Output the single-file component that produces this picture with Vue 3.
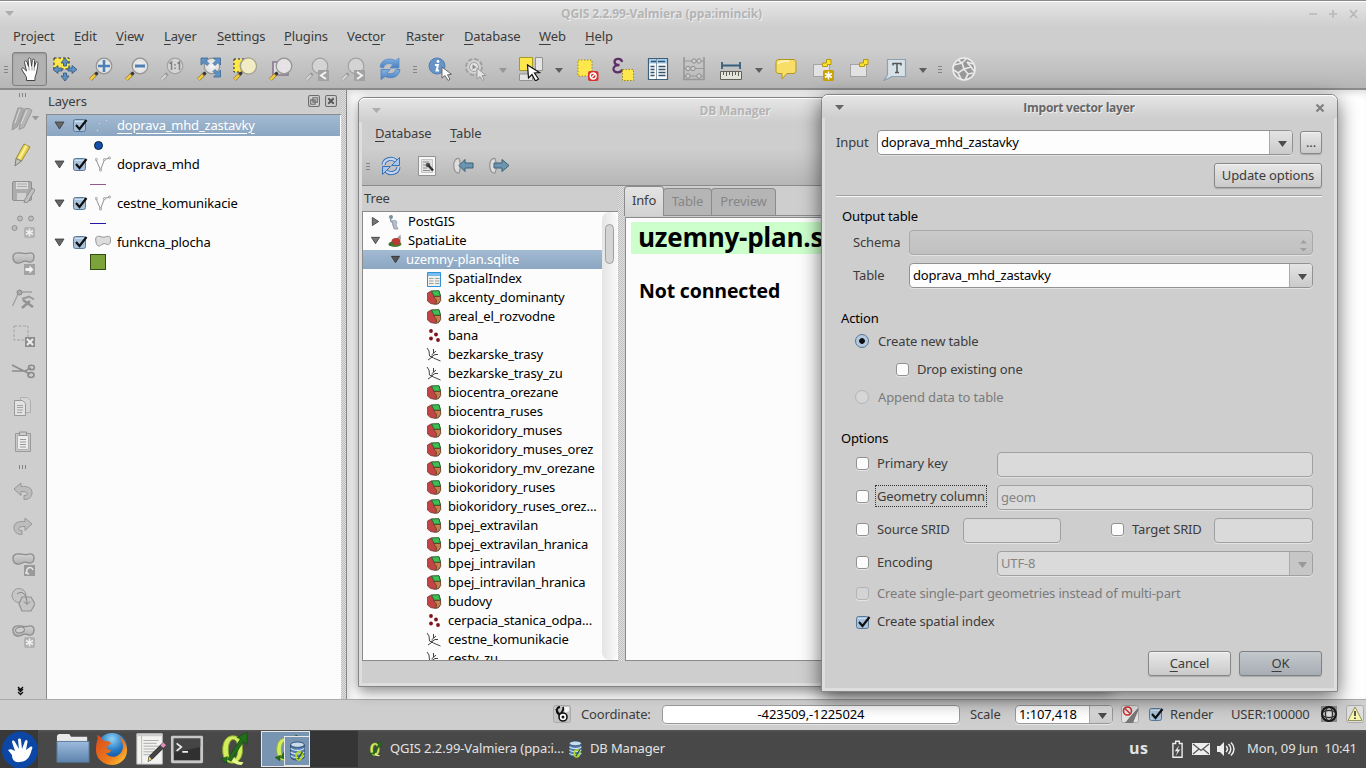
<script setup>
const menus = [
  { a: 'P', b: 'r', c: 'oject', w: 61 }, { a: '', b: 'E', c: 'dit', w: 42 }, { a: '', b: 'V', c: 'iew', w: 48 },
  { a: '', b: 'L', c: 'ayer', w: 53 }, { a: '', b: 'S', c: 'ettings', w: 67 }, { a: '', b: 'P', c: 'lugins', w: 63 },
  { a: 'Vect', b: 'o', c: 'r', w: 59 }, { a: '', b: 'R', c: 'aster', w: 58 }, { a: '', b: 'D', c: 'atabase', w: 75 },
  { a: '', b: 'W', c: 'eb', w: 46 }, { a: '', b: 'H', c: 'elp', w: 40 },
]
const tools = [
  { i: 'grip', w: 12 }, { i: 'hand', w: 35, on: true }, { i: 'pansel', w: 35 }, { i: 'zoomin', w: 37 }, { i: 'zoomout', w: 35 },
  { i: 'zoomone', w: 36 }, { i: 'zoomfull', w: 37 }, { i: 'zoomsel', w: 36 }, { i: 'zoomlayer', w: 36 },
  { i: 'zoomlast', w: 36 }, { i: 'zoomnext', w: 36 }, { i: 'refresh', w: 37 }, { i: 'grip', w: 14 },
  { i: 'info', w: 36 }, { i: 'gear', w: 36 }, { i: 'dropoff', w: 18 }, { i: 'select', w: 38 }, { i: 'drop', w: 18 },
  { i: 'deselect', w: 38 }, { i: 'epsilon', w: 34 }, { i: 'table', w: 36 }, { i: 'abacus', w: 36 }, { i: 'ruler', w: 37 },
  { i: 'drop', w: 19 }, { i: 'bubble', w: 36 }, { i: 'bmnew', w: 38 }, { i: 'bookmark', w: 34 }, { i: 'textnote', w: 38 },
  { i: 'drop', w: 17 }, { i: 'grip', w: 18 }, { i: 'globe', w: 30 },
]
const sideTools = [
  { i: 'vgrip', h: 10 }, { i: 'pencils', h: 37 }, { i: 'pencil', h: 36 }, { i: 'save', h: 35 }, { i: 'points', h: 37 },
  { i: 'movefeat', h: 36 }, { i: 'nodetool', h: 37 }, { i: 'delsel', h: 35 }, { i: 'scissors', h: 35 }, { i: 'copy', h: 36 },
  { i: 'paste', h: 36 }, { i: 'vgrip', h: 14 }, { i: 'undo', h: 35 }, { i: 'redo', h: 36 }, { i: 'rotate', h: 37 },
  { i: 'simplify', h: 36 }, { i: 'ring', h: 36 },
]
const layers = [
  { n: 'doprava_mhd_zastavky', i: 'lpoint', s: 'sdot', sel: true }, { n: 'doprava_mhd', i: 'lline', s: 'spurple' },
  { n: 'cestne_komunikacie', i: 'lline', s: 'sblue' }, { n: 'funkcna_plocha', i: 'lpoly', s: 'sgreen' },
]
const tree = [
  ['SpatialIndex', 'tbl'], ['akcenty_dominanty', 'poly'], ['areal_el_rozvodne', 'poly'], ['bana', 'pts'],
  ['bezkarske_trasy', 'lin'], ['bezkarske_trasy_zu', 'lin'], ['biocentra_orezane', 'poly'], ['biocentra_ruses', 'poly'],
  ['biokoridory_muses', 'poly'], ['biokoridory_muses_orez', 'poly'], ['biokoridory_mv_orezane', 'poly'],
  ['biokoridory_ruses', 'poly'], ['biokoridory_ruses_orez...', 'poly'], ['bpej_extravilan', 'poly'],
  ['bpej_extravilan_hranica', 'poly'], ['bpej_intravilan', 'poly'], ['bpej_intravilan_hranica', 'poly'],
  ['budovy', 'poly'], ['cerpacia_stanica_odpa...', 'pts'], ['cestne_komunikacie', 'lin'], ['cesty_zu', 'lin'],
]
</script>

<template>
  <svg class="defs" aria-hidden="true">
    <defs>
      <linearGradient id="gBlue" x1="0" y1="0" x2="0" y2="1"><stop offset="0" stop-color="#86b2e2" /><stop offset="1" stop-color="#477fc0" /></linearGradient>
      <linearGradient id="gGrey" x1="0" y1="0" x2="0" y2="1"><stop offset="0" stop-color="#d2d2d2" /><stop offset="1" stop-color="#b0b0b0" /></linearGradient>
      <radialGradient id="gLens"><stop offset="0" stop-color="#f6f6f6" /><stop offset="1" stop-color="#dcdcdc" /></radialGradient>
      <linearGradient id="gFolder" x1="0" y1="0" x2="0" y2="1"><stop offset="0" stop-color="#9dbbdc" /><stop offset="1" stop-color="#5d83ad" /></linearGradient>
      <radialGradient id="gFox" cx=".5" cy=".2" r=".8"><stop offset="0" stop-color="#8fd3f5" /><stop offset=".5" stop-color="#2478c4" /><stop offset="1" stop-color="#123a80" /></radialGradient>
      <linearGradient id="gFlame" x1="0" y1="0" x2="1" y2="1"><stop offset="0" stop-color="#d9481a" /><stop offset=".6" stop-color="#ee7a1c" /><stop offset="1" stop-color="#ffd23c" /></linearGradient>
    </defs>
    <symbol id="grip" viewBox="0 0 24 24"><path d="M10 9.500h4M10 12.500h4M10 15.500h4" stroke="#858585" /></symbol>
    <symbol id="vgrip" viewBox="0 0 24 24"><path d="M8.500 10v4M11.500 10v4M14.500 10v4" stroke="#858585" /></symbol>
    <symbol id="drop" viewBox="0 0 24 24"><path d="M8 11h8l-4 5z" fill="#5e5e5e" /></symbol>
    <symbol id="dropoff" viewBox="0 0 24 24"><path d="M8 11h8l-4 5z" fill="#969696" /></symbol>
    <symbol id="hand" viewBox="0 0 24 24"><path d="M7.500 18.500 4 13c-1-1.800 1-2.700 2.200-1.200L8.500 14 6.500 5.500c-.4-2 2-2.300 2.500-.5l1.500 4.500-.3-7c0-2 2.400-2 2.600 0l.8 6.800.8-6c.3-1.700 2.300-1.500 2.200.3l-.3 6.600 1.500-4.500c.6-1.500 2.400-1 2.200.6-.5 4-1 8-2 11l-1 3.200v3H8.500v-3z" fill="#fff" stroke="#444" /><path d="M11 9.500v4M14 9.500v4M16.500 10l-.5 3.500" stroke="#999" /></symbol>
    <symbol id="pansel" viewBox="0 0 24 24"><path d="M1 1h15v11H1z" fill="#fde74c" stroke="#222" stroke-dasharray="2.500 2" /><path d="m12 1 4 5h-2.500v3h-3V6H8zM12 24l4-5h-2.500v-3h-3v3H8zM0 12.500l5-4V11h4v3H5v2.500zM24 12.500l-5-4V11h-4v3h4v2.500z" fill="#6090c0" stroke="#2b5580" stroke-width=".8" /></symbol>
    <symbol id="lens" viewBox="0 0 24 24"><path d="m1.500 22.500 6.500-6.500" stroke="#6d643c" stroke-width="3.600" /><path d="m1.500 22.500 4.500-4.500" stroke="#f4c938" stroke-width="2.600" /><path d="m6.800 17.200 1.800-1.800" stroke="#333" stroke-width="2.800" /><circle cx="15" cy="9" r="7.800" fill="url(#gLens)" stroke="#949494" stroke-width="1.200" /></symbol>
    <symbol id="glens" viewBox="0 0 24 24"><path d="m1.500 22.500 6-6" stroke="#9a9a9a" stroke-width="3.600" /><path d="m1.500 22.500 4.500-4.500" stroke="#d4d4d4" stroke-width="2.300" /><circle cx="15" cy="9" r="7.800" fill="#d4d4d4" stroke="#a2a2a2" stroke-width="1.200" /></symbol>
    <symbol id="zoomin" viewBox="0 0 24 24"><use href="#lens" /><path d="M9 9h12M15 3v12" stroke="#4d80b4" stroke-width="2.600" /></symbol>
    <symbol id="zoomout" viewBox="0 0 24 24"><use href="#lens" /><path d="M10 9h10" stroke="#4d80b4" stroke-width="3" /></symbol>
    <symbol id="zoomone" viewBox="0 0 24 24"><use href="#glens" /><path d="m9.500 6.500 2-1.500v8M17.500 6.500l2-1.500v8M15 7v1.500M15 10.500V12" fill="none" stroke="#808080" stroke-width="1.500" /></symbol>
    <symbol id="zoomfull" viewBox="0 0 24 24"><use href="#lens" /><path d="M4 1h7L9 3.500l3 3-2 2-3-3L4 8zM23.500 1v7L21 5.500l-3 3-2-2 3-3L16.500 1zM23.500 20h-7l2.500-2.500-3-3 2-2 3 3 2.500-2.500z" fill="#5f93c8" stroke="#3b6a98" stroke-width=".8" /></symbol>
    <symbol id="zoomsel" viewBox="0 0 24 24"><path d="M1 2h14v13H1z" fill="#fde74c" stroke="#222" stroke-dasharray="2 2" /><use href="#lens" /><circle cx="15.500" cy="9" r="8" fill="#f2ecc5" stroke="#a4a08a" stroke-width="1.200" /></symbol>
    <symbol id="zoomlayer" viewBox="0 0 24 24"><path d="M4 5h15v13H4z" fill="#ddd" stroke="#8b7690" stroke-width="1.600" /><use href="#lens" /><path d="M10 5h9v8h-9z" fill="#e6dee6" opacity=".8" /></symbol>
    <symbol id="zoomlast" viewBox="0 0 24 24"><use href="#glens" /><path d="M13 13h11v11H13z" fill="#a2a2a2" /><path d="m21 15-5 3.500 5 3.500" fill="none" stroke="#f4f4f4" stroke-width="2" /></symbol>
    <symbol id="zoomnext" viewBox="0 0 24 24"><use href="#glens" /><path d="M13 13h11v11H13z" fill="#a2a2a2" /><path d="m16 15 5 3.500-5 3.500" fill="none" stroke="#f4f4f4" stroke-width="2" /></symbol>
    <symbol id="refresh" viewBox="0 0 24 24"><path d="M2 10C3 3 10 0 17.500 3.500L21 1v10h-9l3-3.500C10 5.500 6.500 7 5.500 11z" fill="url(#gBlue)" stroke="#5a8cc8" stroke-width=".8" /><path d="M22 12.500c-1 7.500-8 10-15 7L3 22.500v-10h9L9 16c4 2 8 0 9-3.500z" fill="url(#gBlue)" stroke="#4a80c0" stroke-width=".8" /></symbol>
    <symbol id="arrowcur" viewBox="0 0 24 24"><path d="M12 10v11l3-2.500 3 5 2-1.200-2.500-4.500 4-.5z" fill="#fff" stroke="#666" /></symbol>
    <symbol id="info" viewBox="0 0 24 24"><circle cx="9" cy="9" r="8" fill="#6793c6" stroke="#4f7fb5" /><circle cx="10" cy="4.500" r="1.400" fill="#fff" /><path d="M7 8h3L8.500 13.500H11" fill="none" stroke="#fff" stroke-width="1.900" /><use href="#arrowcur" x="2" /></symbol>
    <symbol id="gear" viewBox="0 0 24 24"><circle cx="10" cy="10" r="7.500" fill="#c4c4c4" stroke="#a0a0a0" stroke-width="3" stroke-dasharray="4 1.900" /><circle cx="10" cy="10" r="7" fill="#d2d2d2" /><circle cx="10" cy="10" r="4.500" fill="#e2e2e2" stroke="#a0a0a0" /><path d="m8.500 7.500 4 2.500-4 2.500z" fill="#8c8c8c" /><path d="M13 11v11l3-2.500 2.500 4 1.500-1-2-4h4z" fill="#e4e4e4" stroke="#9a9a9a" /></symbol>
    <symbol id="select" viewBox="0 0 24 24"><path d="M.5.500h13v13H.500z" fill="#fde74c" stroke="#a89a1c" /><path d="M16.500.500h7v13h-7zM.500 17h13v6.500H.500z" fill="#e4e4e4" stroke="#929292" /><path d="m8.500 8 1 13 3.500-3.500 3.500 6.500 3-2-4-6 5-.5z" fill="#fff" stroke="#111" stroke-width="1.200" /></symbol>
    <symbol id="deselect" viewBox="0 0 24 24"><path d="M3 3h14v16H3z" fill="#fde74c" stroke="#a08a10" stroke-dasharray="1.500 1.500" /><rect x="13" y="14" width="10.500" height="10" rx="2" fill="#dc3030" /><circle cx="18.200" cy="19" r="3" fill="none" stroke="#fff" stroke-width="1.300" /><path d="m16 21 4-4" stroke="#fff" stroke-width="1.300" /></symbol>
    <symbol id="epsilon" viewBox="0 0 24 24"><path d="M11 5C10.500 1 4 1 3.500 4.500 3.500 7 6 8 8.500 8 5 8 2 9.500 2.500 12.500 3.500 16.500 10 16 11.500 12.500" fill="none" stroke="#5d2e68" stroke-width="2.300" /><path d="M11.500 12.500h11v11h-11z" fill="#fde74c" stroke="#a08a10" stroke-dasharray="1.500 1.500" /></symbol>
    <symbol id="table" viewBox="0 0 24 24"><path d="M2.500 1.500h19v21h-19z" fill="#fafafa" stroke="#3c5f7a" stroke-width="1.200" /><path d="M3 2h18v4.500H3z" fill="#a8cce8" /><path d="M5 4.500h5M12 4.500h7" stroke="#2f536e" stroke-width="1.400" /><path d="M10.500 2v20" stroke="#6a8498" stroke-width=".8" /><path d="M4.500 9.500h4M12.500 9.500h7M4.500 12.500h4M12.500 12.500h7M4.500 15.500h4M12.500 15.500h7M4.500 18.500h4M12.500 18.500h7" stroke="#34526a" stroke-width="1.300" /></symbol>
    <symbol id="abacus" viewBox="0 0 24 24"><path d="M2 0v23M22 0v23M1 22.500h22" stroke="#989898" stroke-width="1.600" /><path d="M2 4h20M2 11.500h20M2 19h20" stroke="#989898" /><g fill="#cfcfcf" stroke="#8c8c8c"><circle cx="12" cy="4" r="2.200" /><circle cx="17" cy="4" r="2.200" /><circle cx="6" cy="11.500" r="2.200" /><circle cx="11" cy="11.500" r="2.200" /><circle cx="6" cy="19" r="2.200" /><circle cx="17" cy="19" r="2.200" /></g></symbol>
    <symbol id="ruler" viewBox="0 0 24 24"><path d="M3 8.500h18M3 5v7M21 5v7" stroke="#365f7c" stroke-width="1.800" /><path d="M1.500 14.500h21v8h-21z" fill="#e4e4da" stroke="#606058" /><path d="M4.500 15v3M7.500 15v4M10.500 15v3M13.500 15v4M16.500 15v3M19.500 15v4" stroke="#606058" /></symbol>
    <symbol id="bubble" viewBox="0 0 24 24"><path d="M5 2.500h14c2 0 3 1 3 3v8c0 2-1 3-3 3h-6L8 22v-5.500H5c-2 0-3-1-3-3v-8c0-2 1-3 3-3z" fill="#f8dd66" stroke="#b3951c" /><path d="M4 7c1-3 5-3 11-3" stroke="#fdf3b4" stroke-width="2" fill="none" /></symbol>
    <symbol id="bookmark" viewBox="0 0 24 24"><path d="M3.500 7.500h16v12h-16z" fill="#e2e2e2" stroke="#777" stroke-dasharray="1 1" /><path d="M16.500 2.500h4.500v5h-3.500v2h-5V6h4z" fill="#fde32c" stroke="#b59710" /></symbol>
    <symbol id="bmnew" viewBox="0 0 24 24"><use href="#bookmark" x="-1" /><rect x="12" y="13" width="11" height="11" rx="1.500" fill="#c9a200" /><path d="M17.500 14.500v8M14 16.500l7 4M21 16.500l-7 4" stroke="#fff" stroke-width="1.600" /></symbol>
    <symbol id="textnote" viewBox="0 0 24 24"><path d="M4.500 2.500h18v17H9L1 23.500l3.500-6z" fill="#d7e1e8" stroke="#8ca0ae" stroke-width="1.200" /><path d="M10 8.500v-2h8v2M14 6.500v9M12 15.500h4" fill="none" stroke="#555" stroke-width="1.500" /></symbol>
    <symbol id="globe" viewBox="0 0 24 24"><circle cx="12" cy="12" r="11" fill="#989898" stroke="#eee" stroke-width="1.600" /><path d="M2 8l8-2 5-5M10 6l2 6-6 4-4-3M12 12l7-2 3 4M19 10l-4-5M6 16l3 6M12 12l4 5-3 6M16 17l5-1M6 3l4 3M15 5l6 2" fill="none" stroke="#e8e8e8" stroke-width="1.700" /></symbol>
    <symbol id="pencils" viewBox="0 0 24 24"><path d="M7 1h4l3 2L6 20l-5 3 1-7z" fill="#aaa" stroke="#999" /><path d="M14 1.500h4l3 2-8 17-5 2 1-6z" fill="#b5b5b5" stroke="#999" /><path d="M16 3 10 17M9 2 4 16" stroke="#ddd" /></symbol>
    <symbol id="pencil" viewBox="0 0 24 24"><path d="m13 1 6 3-8.500 14L5 15.500z" fill="#e8d04a" stroke="#9a8f40" /><path d="M15.500 2.500 8 16" stroke="#fbf2a0" stroke-width="2" /><path d="m5 15.500-1 7.500 6.500-5z" fill="#c4c4b8" stroke="#808078" /></symbol>
    <symbol id="save" viewBox="0 0 24 24"><rect x="1.500" y="2.500" width="19" height="19" rx="1.500" fill="#acacac" stroke="#909090" /><path d="M5 3h12v7H5z" fill="#dadada" /><path d="M6 5h10M6 7.500h10" stroke="#a8a8a8" /><path d="M6 14h9v7H6z" fill="#d0d0d0" /><path d="m21 9 3 2-7 12-4 1 1-4z" fill="#c0c0c0" stroke="#909090" /></symbol>
    <symbol id="points" viewBox="0 0 24 24"><g fill="#bcbcbc" stroke="#929292"><circle cx="9" cy="3.500" r="2.500" /><circle cx="20" cy="3.500" r="2.500" /><circle cx="3.500" cy="13" r="2.500" /></g><rect x="13" y="12" width="11" height="11" rx="2" fill="#b2b2b2" /><path d="M18.500 13.500v8M15 15.500l7 4M22 15.500l-7 4" stroke="#eee" stroke-width="1.500" /></symbol>
    <symbol id="blob" viewBox="0 0 24 24"><path d="M2 8c0-4 4-4.500 7-4s5 1 7 .5c5-1.500 7 0 7 3s-1 6-5 5.500c-3-.5-4-1.500-6-.5-2 1.500-4 2-6 1.500C3 13.500 2 11 2 8z" fill="url(#gGrey)" stroke="#8d8d8d" stroke-width="1.300" /></symbol>
    <symbol id="movefeat" viewBox="0 0 24 24"><use href="#blob" y="-2" /><path d="M13 13h11v11H13z" fill="#a2a2a2" /><path d="M14.500 17h4v-2.500l4 4-4 4V20h-4z" fill="#f2f2f2" /></symbol>
    <symbol id="nodetool" viewBox="0 0 24 24"><path d="M1.500 18 8 4h13" fill="none" stroke="#a0a0a0" stroke-width="1.300" /><circle cx="8.500" cy="4.500" r="2.500" fill="#a8a8a8" stroke="#888" /><path d="m11 20 8-7M12 12l10 7" stroke="#929292" stroke-width="2.600" /><path d="m11 11 7-2.500 5 3" fill="none" stroke="#999" stroke-width="2" /></symbol>
    <symbol id="delsel" viewBox="0 0 24 24"><path d="M3 2h14v14H3z" fill="none" stroke="#a2a2a2" stroke-dasharray="3 1.500" /><path d="M14 13h10v10H14z" fill="#8c8c8c" /><path d="m16 15 6 6M22 15l-6 6" stroke="#eee" stroke-width="2" /></symbol>
    <symbol id="scissors" viewBox="0 0 24 24"><path d="m1 6 18 9M1 12h13l6-3" fill="none" stroke="#8c8c8c" stroke-width="1.600" /><ellipse cx="20.500" cy="8.500" rx="3" ry="2.200" fill="none" stroke="#8a8a8a" stroke-width="1.600" /><ellipse cx="20" cy="16" rx="3" ry="2.500" fill="none" stroke="#8a8a8a" stroke-width="1.600" /></symbol>
    <symbol id="copy" viewBox="0 0 24 24"><path d="M9.500 3.500h7l3 3v12h-10z" fill="#d4d4d4" stroke="#b0b0b0" /><path d="M3.500 6.500h8l3 3v12h-11z" fill="#e2e2e2" stroke="#999" /><path d="M6 11.500h6M6 13.500h6M6 16h6M6 18.500h5" stroke="#a2a2a2" /></symbol>
    <symbol id="paste" viewBox="0 0 24 24"><path d="M4.500 3.500h15v18h-15z" fill="#c8c8c8" stroke="#999" /><path d="M6.500 5.500h11v14h-11z" fill="#ececec" stroke="#b0b0b0" /><path d="M8.500 2h7v3.500h-7z" fill="#ccc" stroke="#929292" /><path d="M9 9.500h6M9 12h6M9 14.500h6M9 17h6" stroke="#999" /></symbol>
    <symbol id="undo" viewBox="0 0 24 24"><path d="m3 9 7-6v3.500c7-.5 11 1.500 11 6s-3 7-8 7v-4c3 0 4-1 3-2.500s-3-1.500-6-1.500v4z" fill="#bdbdbd" stroke="#979797" /></symbol>
    <symbol id="redo" viewBox="0 0 24 24"><path d="m21 9-7-6v3.500C7 6 3 8 3 12.500s3 7 8 7v-4c-3 0-4-1-3-2.500s3-1.500 6-1.500v4z" fill="#bdbdbd" stroke="#979797" /></symbol>
    <symbol id="rotate" viewBox="0 0 24 24"><use href="#blob" y="-2" /><path d="M13 13h11v11H13z" fill="#999" /><path d="M16 21c-2-6 5-7 6-3M18 22l-3-1 1-3" fill="none" stroke="#e5e5e5" stroke-width="1.500" /></symbol>
    <symbol id="simplify" viewBox="0 0 24 24"><circle cx="8" cy="7.500" r="7" fill="#c6c6c6" stroke="#999" /><path d="m11 9 9 0 4 7-4 7h-9l-3-7z" fill="#c4c4c4" stroke="#929292" stroke-width="1.200" /><path d="M6 6c5-4 10 0 10 10M13 13.500l3 3 3-3" fill="none" stroke="#858585" /></symbol>
    <symbol id="ring" viewBox="0 0 24 24"><use href="#blob" y="-2" /><ellipse cx="9" cy="6" rx="4.500" ry="2.800" fill="#cecece" stroke="#8d8d8d" transform="rotate(-10 9 6)" /><rect x="13" y="13" width="11" height="11" rx="2" fill="#b2b2b2" /><path d="M18.500 14.500v8M15 16.500l7 4M22 16.500l-7 4" stroke="#eee" stroke-width="1.500" /></symbol>
    <symbol id="check" viewBox="0 0 16 16"><rect x="1.500" y="2.500" width="12" height="12" rx="2" fill="#a9c2dc" stroke="#587998" /><path d="M3 4.500h9" stroke="#d0deec" /><path d="m4 8 3.500 4L14.500 3" fill="none" stroke="#111" stroke-width="2.200" /></symbol>
    <symbol id="lpoint" viewBox="0 0 16 16"><g fill="#d7dde3" stroke="#8fa3b4" stroke-width=".7"><circle cx="4.500" cy="6.500" r="1.100" /><circle cx="2.500" cy="13.500" r="1.100" /><circle cx="11.500" cy="3.500" r="1.100" /></g></symbol>
    <symbol id="lline" viewBox="0 0 16 16"><path d="M1 3.500 5.500 14l4-10.500L14.500 2" fill="none" stroke="#929292" /><g fill="#e2e2e2" stroke="#929292" stroke-width=".7"><circle cx="1.300" cy="3.500" r="1.100" /><circle cx="5.500" cy="14" r="1.200" /><circle cx="9.500" cy="3.500" r="1.100" /><circle cx="14.500" cy="2" r="1.100" /></g></symbol>
    <symbol id="lpoly" viewBox="0 0 16 16"><path d="M.7 5c0-3 3-3.300 5.300-2.300s4 .3 5.500-.2c3.500-1 4.300 1 4 4.500-.3 4-2.800 4-4.500 3-2-1-4 0-5.500 1.500C2 13.500.7 9 .7 5z" fill="#ddd" stroke="#929292" /></symbol>
    <symbol id="poly" viewBox="0 0 16 16"><path d="M1.500 3 5 1h8l1.500 5-1 6.500-4 2-5-1-3-2.500z" fill="#c34444" stroke="#5a3834" stroke-width=".7" /><path d="m5.500 1 7.500-.3 1.500 5.500H8z" fill="#3cc054" stroke="#1e5a2c" stroke-width=".8" /><path d="M7.500 6.500h7l.2 4-2.500 3.500H10l.5-3.500z" fill="#c67f48" stroke="#5a3c2c" stroke-width=".8" /></symbol>
    <symbol id="pts" viewBox="0 0 16 16"><g fill="#7e1218"><circle cx="5" cy="3" r="1.900" /><circle cx="10" cy="6.500" r="1.900" /><circle cx="5" cy="10.500" r="1.900" /><circle cx="12" cy="12" r="1.900" /></g></symbol>
    <symbol id="lin" viewBox="0 0 16 16"><path d="M1 1 3 4l.5 5 4 2 7 3M2 13l5-3.500M5.500 8 10 4M7.500 2v4M5 10l4-2.500h3" fill="none" stroke="#444" stroke-width="1" /></symbol>
    <symbol id="tbl" viewBox="0 0 16 16"><path d="M1.500 1.500h13v14h-13z" fill="#f0f0ec" stroke="#2f91d8" /><path d="M2 2h12v3H2z" fill="#78bdf0" /><path d="M3 7.500h4.500M9 7.500h4.500M3 10h4.500M9 10h4.500M3 12.500h4.500M9 12.500h4.500" stroke="#a0a09a" /></symbol>
    <symbol id="crs" viewBox="0 0 18 18"><path d="M1 1h16v16H1z" fill="#8a8a8a" /><circle cx="9" cy="9" r="7" fill="#b4b4b4" stroke="#161616" stroke-width="2" /><ellipse cx="9" cy="9" rx="3.500" ry="7" fill="none" stroke="#222" /><ellipse cx="9" cy="9" rx="7" ry="3.500" fill="none" stroke="#222" /><circle cx="9" cy="9" r="2.500" fill="#ddd" /></symbol>
    <symbol id="qlogo" viewBox="0 0 30 36"><path d="M14 4C7 4 3 10 3 19s4 14 10 14 11-5 11-14S21 4 14 4zm0 4c4 0 5 5 5 11s-2 10-5 10-5-4-5-10 2-11 5-11z" fill="#d2ee5c" stroke="#86a52c" fill-rule="evenodd" /><path d="M15 26c2 5 5 6 10 6l-2 3c-6 0-10-3-12-7z" fill="#e7f88b" /><path d="M8 29 22 7l-4-1 11-6v13l-4-3-13 21zM1 29l7-3-1 7z" fill="#236e1b" stroke="#124510" stroke-width=".6" /></symbol>
    <symbol id="dbicon" viewBox="0 0 20 22"><path d="M3 4v14c1 4 14 4 15 0V4z" fill="#537fad" stroke="#2a4972" /><ellipse cx="10.500" cy="4" rx="7.500" ry="3" fill="#cbdbe9" stroke="#2a4972" /><path d="M3 8c2 3 13 3 15 0M3 12c2 3 13 3 15 0M3 16c2 3 13 3 15 0" fill="none" stroke="#d3e1ee" stroke-width="1.300" /><path d="M13 12c-5 0-5 9-1 9s6-9 1-9z" fill="none" stroke="#b9d62b" stroke-width="2" /><path d="m11 20 5-8" stroke="#27611f" stroke-width="1.500" /></symbol>
  </svg>

  <div class="desktop">
    <header class="titlebar main-title">
      <svg class="tri" viewBox="0 0 10 6"><path d="M0 0h9L4.500 5z" fill="#adadad" /></svg>
      <span class="wt wt-main">QGIS 2.2.99-Valmiera (ppa:imincik)</span>
      <svg class="winctl" viewBox="0 0 54 12"><path d="M2 6h8M22 6h8M26 2v8M43 2l7 8M50 2l-7 8" stroke="#b8b8b8" stroke-width="1.600" /></svg>
    </header>
    <nav class="menubar">
      <span v-for="m in menus" :key="m.a + m.b + m.c" :style="{ width: m.w + 'px' }">{{ m.a }}<u>{{ m.b }}</u>{{ m.c }}</span>
    </nav>
    <div class="toolbar">
      <span v-for="(t, k) in tools" :key="k" class="tool" :class="{ on: t.on }" :style="{ width: t.w + 'px' }"><svg class="i24"><use :href="'#' + t.i" /></svg></span>
    </div>

    <div class="body">
      <aside class="side">
        <span v-for="(t, k) in sideTools" :key="k" class="stool" :style="{ height: t.h + 'px' }">
          <svg class="i24"><use :href="'#' + t.i" /></svg>
          <svg v-if="t.i === 'pencils'" class="mini" viewBox="0 0 7 5"><path d="M0 0h7L3.500 4.500z" fill="#999" /></svg>
        </span>
        <svg class="chev" viewBox="0 0 7 9"><path d="m1 0 2.500 2.500L6 0M1 2l2.500 2.500L6 2M1 5l2.500 2.500L6 5" fill="none" stroke="#111" stroke-width="1.300" /></svg>
      </aside>
      <section class="dock">
        <div class="dock-head">
          <span>Layers</span>
          <svg class="dockbtn" viewBox="0 0 11 11"><rect x=".5" y=".5" width="10" height="10" rx="1.500" fill="none" stroke="#6c6c6c" /><path d="M4.500 2.500h4v4h-4zM2.500 4.500h4v4h-4z" fill="#cecece" stroke="#6c6c6c" /></svg>
          <svg class="dockbtn" viewBox="0 0 11 11"><rect x=".5" y=".5" width="10" height="10" rx="1.500" fill="none" stroke="#6c6c6c" /><path d="m3 3 5 5M8 3 3 8" stroke="#555" stroke-width="1.800" /></svg>
        </div>
        <div class="layers">
          <template v-for="l in layers" :key="l.n">
            <div class="lrow" :class="{ sel: l.sel }">
              <svg class="tri dark" viewBox="0 0 10 9"><path d="M.5 1h9L5 8z" fill="#666" stroke="#3a3a3a" stroke-width=".8" /></svg>
              <svg class="chk"><use href="#check" /></svg>
              <svg class="i16"><use :href="'#' + l.i" /></svg>
              <span>{{ l.n }}</span>
            </div>
            <div class="srow"><i :class="l.s"></i></div>
          </template>
        </div>
      </section>
      <div class="split"></div>
      <main class="canvas"></main>
    </div>

    <footer class="status">
      <svg class="stbtn s-ext" viewBox="0 0 18 18"><rect x=".5" y=".5" width="17" height="17" rx="2" fill="#c4c4c4" stroke="#aaa" /><path d="M7 2c-4 0-4 7-1 7s5-5 4-7M3 4l4 7 4-8" fill="none" stroke="#111" stroke-width="1.800" /><path d="M11 2h5v4l-4 2z" fill="#f4f4f4" /><circle cx="10" cy="12" r="4" fill="#fff" stroke="#111" stroke-width="1.600" /><circle cx="10" cy="12" r="1.500" fill="#111" /></svg>
      <span class="lab s-co">Coordinate:</span>
      <span class="field s-cf">-423509,-1225024</span>
      <span class="lab s-sc">Scale</span>
      <span class="field s-sf"><b>1:107,418</b><i class="dd"><svg viewBox="0 0 9 6"><path d="M0 0h9L4.500 6z" fill="#4c4c4c" /></svg></i></span>
      <svg class="stbtn s-stop" viewBox="0 0 18 18"><rect x=".5" y=".5" width="17" height="17" rx="2" fill="#e4e4e4" stroke="#aaa" /><path d="M17 3 8 13l-4 5h8l2-5 3-7z" fill="#777" /><circle cx="6.500" cy="6" r="4" fill="#eee" stroke="#cc3030" stroke-width="1.600" /><path d="m4 3.500 5 5" stroke="#cc3030" stroke-width="1.500" /></svg>
      <svg class="chk s-ck"><use href="#check" /></svg>
      <span class="lab s-re">Render</span>
      <span class="lab s-us">USER:100000</span>
      <svg class="stbtn"><use href="#crs" /></svg>
      <svg class="stbtn s-wn" viewBox="0 0 18 18"><rect x=".5" y=".5" width="17" height="17" rx="2" fill="#dedede" stroke="#aaa" /><path d="m9 2 7 13.500H2z" fill="#faf8b0" stroke="#94945c" /><path d="M9 6v5M9 12.500V14" stroke="#333" stroke-width="1.600" /></svg>
    </footer>

    <div class="taskbar">
      <span class="start"><svg viewBox="0 0 38 38"><ellipse cx="20" cy="20" rx="18" ry="18.500" fill="#0c47a5" /><path d="M8 20c3-2 5 0 7 1l-3-9c0-2 2-2 3 0l4 7-1-9c0-2 3-2 3 0l1 9 3-8c1-2 3-1 2.500 1L26 20l4-3c2-1 3 0 2 2-2 6-3 12-12 13-6 1-8-3-8-7z" fill="#fff" /></svg></span>
      <svg class="tk k-fo" viewBox="0 0 36 36"><path d="M1 9V4l2-2h11l2 3h17v6H1z" fill="#e8e8e8" /><path d="M1 10h34v22H1z" fill="url(#gFolder)" stroke="#56779b" /></svg>
      <svg class="tk k-ff" viewBox="0 0 36 36"><circle cx="18" cy="17" r="16" fill="url(#gFox)" /><path d="M3 7 2 3c4 2 6 4 7 7 3-1 7 0 8 2l-5 4c0 2 2 3 5 3-1 3-4 4-6 3 5 7 15 5 18-3 2-6-1-11-4-14 6 2 9 8 9 14 0 9-7 16-16 16S1 28 1 19C1 14 2 10 3 7z" fill="url(#gFlame)" /></svg>
      <svg class="tk k-ed" viewBox="0 0 36 36"><path d="M3 2h27v32H3z" fill="#f2f2f0" stroke="#bbb" /><path d="M3 3h27" stroke="#ccc" stroke-width="3" /><path d="M8 4v30" stroke="#e0a7a7" /><path d="M10 9h16M10 12h14M10 15h16M10 18h12M10 21h14M10 24h8" stroke="#a9a9a9" /><path d="m30 12 3 3-14 14-4 2 1-5z" fill="#444" stroke="#222" /><path d="m28 14 3-3 3 3-3 3z" fill="#dd8cbd" /><path d="m15 31 1-5 3 3z" fill="#efcf74" /></svg>
      <svg class="tk k-te" viewBox="0 0 36 36"><rect x="1" y="4" width="34" height="29" rx="1.500" fill="#c7c7c7" /><path d="M4 7h28v23H4z" fill="#303030" /><path d="M4 7h28v9L4 22z" fill="#454545" /><path d="m7 12 5 4-5 4M13 21h6" fill="none" stroke="#eee" stroke-width="1.800" /></svg>
      <svg class="k-q"><use href="#qlogo" /></svg>
      <span class="pager-on"><svg class="pq"><use href="#qlogo" /></svg><span class="pwin"><svg><use href="#dbicon" /></svg></span></span>
      <span class="pager-off"></span>
      <svg class="tq"><use href="#qlogo" /></svg><span class="tt t1">QGIS 2.2.99-Valmiera (ppa:i...</span>
      <svg class="td"><use href="#dbicon" /></svg><span class="tt t2">DB Manager</span>
      <b class="us">us</b>
      <svg class="bat" viewBox="0 0 12 20"><path d="M4 1h4v2.500h3v15H1v-15h3z" fill="none" stroke="#eee" stroke-width="1.500" /><path d="m8 5-5 7h3l-2 5 5-7H6z" fill="#eee" /></svg>
      <svg class="mail" viewBox="0 0 18 14"><path d="M0 1h18v12H0z" fill="#eee" /><path d="m1 2 8 6.500L17 2M1 12l6-5M17 12l-6-5" fill="none" stroke="#555" stroke-width="1.200" /></svg>
      <svg class="snd" viewBox="0 0 19 16"><path d="M1 5h3l4-4v14l-4-4H1z" fill="#eee" /><path d="M10 5c2 2 2 4 0 6M12.500 3c3 3 3 7 0 10M15 1.500c4 4 4 9 0 13" fill="none" stroke="#eee" stroke-width="1.500" /></svg>
      <span class="tt date">Mon, 09 Jun&nbsp; 10:41</span>
    </div>

    <section class="win db">
      <header class="titlebar">
        <svg class="tri" viewBox="0 0 10 6"><path d="M0 0h9L4.500 5z" fill="#adadad" /></svg>
        <span class="wt wt-db">DB Manager</span>
      </header>
      <div class="db-in">
        <nav class="dbmenu"><span class="m1"><u>D</u>atabase</span><span><u>T</u>able</span></nav>
        <div class="dbtools">
          <svg class="i24 g"><use href="#grip" /></svg>
          <svg class="dbi" viewBox="0 0 20 20"><g fill="none" stroke="#3c6fb4" stroke-width="4"><path d="M2.500 9C3 3 11 1 15 5M17.500 11c-.5 6-8.500 8-12.500 4" /></g><g fill="none" stroke="#c2d8f2" stroke-width="2.200"><path d="M2.500 9C3 3 11 1 15 5M17.500 11c-.5 6-8.500 8-12.500 4" /></g><path d="M18.500 1.500v8h-8zM1.500 18.500v-8h8z" fill="#a8c6ea" stroke="#3c6fb4" /></svg>
          <svg class="dbi" viewBox="0 0 20 20"><path d="M1.500.500h17v19h-17z" fill="#f6f6f6" stroke="#929292" /><path d="M4.500 3.500h11v13h-11z" fill="#e0e0e0" stroke="#c4c4c4" /><path d="M6 6h6M6 9h3M6 12h4M6 14.500h7" stroke="#909090" /><circle cx="11" cy="9" r="2.300" fill="#555" /><path d="m11 9 5 5.500" stroke="#333" stroke-width="2.600" /></svg>
          <svg class="dbi" viewBox="0 0 20 20"><path d="M6 2.500C-1 1-1 18 6 17l1-3V6z" fill="#ddd" stroke="#929292" stroke-width="1.200" /><path d="m6 9.500 6-6V7h8v5h-8v3.500z" fill="#6c96b0" stroke="#3d6075" /></svg>
          <svg class="dbi" viewBox="0 0 20 20"><path d="M6 2.500C-1 1-1 18 6 17l1-3V6z" fill="#ddd" stroke="#929292" stroke-width="1.200" /><path d="M20 9.500l-7-6V7H5v5h8v3.500z" fill="#6c96b0" stroke="#3d6075" /></svg>
        </div>
        <div class="dbbody">
          <div class="treecol">
            <div class="treehead">Tree</div>
            <div class="treebox">
              <div class="rows">
                <div class="trow"><svg class="ta" viewBox="0 0 10 10"><path d="M1.500.500v9l7-4.500z" fill="#777" stroke="#444" /></svg><svg class="tl" viewBox="0 0 16 16"><circle cx="4" cy="3" r="2" fill="#78909a" /><path d="M4 4c-1 3 0 4 2 4 0 3 0 5 3 7" fill="none" stroke="#8795a0" stroke-width="1.500" /><path d="M5 7c4-2 6 1 4 4l2 4H7z" fill="#b6bfcb" stroke="#8492a5" stroke-width=".7" /></svg><span>PostGIS</span></div>
                <div class="trow"><svg class="ta" viewBox="0 0 10 10"><path d="M.5 1.500h9l-4.500 7z" fill="#777" stroke="#444" /></svg><svg class="tl" viewBox="0 0 16 16"><path d="m9 6 4.500-4.500.5 5z" fill="#a0a0a0" /><ellipse cx="8" cy="11" rx="6.500" ry="3" fill="#4b7b2c" /><ellipse cx="9" cy="8.500" rx="4.500" ry="3.600" fill="#b83a34" /><path d="m2 12 4-2" stroke="#466a34" stroke-width="2" /></svg><span>SpatiaLite</span></div>
                <div class="trow tsel"><svg class="ta" viewBox="0 0 10 10"><path d="M.5 1.500h9l-4.500 7z" fill="#555" stroke="#333" /></svg><span>uzemny-plan.sqlite</span></div>
                <div v-for="r in tree" :key="r[0]" class="trow leaf"><svg class="tl"><use :href="'#' + r[1]" /></svg><span>{{ r[0] }}</span></div>
              </div>
              <div class="sbar"><i></i></div>
            </div>
          </div>
          <div class="dsplit"></div>
          <div class="infocol">
            <div class="tabs"><span class="tab act">Info</span><span class="tab tb2">Table</span><span class="tab tb3">Preview</span></div>
            <div class="page"><h1>uzemny-plan.sqlite</h1><h2>Not connected</h2></div>
          </div>
        </div>
      </div>
    </section>

    <section class="win dlg">
      <header class="titlebar">
        <svg class="tri" viewBox="0 0 10 6"><path d="M0 0h9L4.500 5z" fill="#666" /></svg>
        <span class="wt wt-dlg">Import vector layer</span>
        <svg class="x" viewBox="0 0 10 10"><path d="m1.500 1.500 7 7M8.500 1.500l-7 7" stroke="#808080" stroke-width="2.200" /></svg>
      </header>
      <div class="dlg-in">
        <div class="r r25 in-row"><span class="l-in">Input</span><span class="combo c-in"><b>doprava_mhd_zastavky</b><i class="dd"><svg viewBox="0 0 9 6"><path d="M0 0h9L4.500 6z" fill="#4c4c4c" /></svg></i></span><button class="btn dots">...</button></div>
        <div class="r r25 up-row"><button class="btn upd">Update options</button></div>
        <hr>
        <div class="r gt g1">Output table</div>
        <div class="r r25 sch"><span class="l-f">Schema</span><span class="combo off long"><svg class="spin" viewBox="0 0 8 12"><path d="M0 3.500h7L3.500 0zM0 8h7l-3.500 3.500z" fill="#a0a0a0" /></svg></span></div>
        <div class="r r25 m8"><span class="l-f">Table</span><span class="combo long"><b>doprava_mhd_zastavky</b><i class="dd"><svg viewBox="0 0 9 6"><path d="M0 0h9L4.500 6z" fill="#4c4c4c" /></svg></i></span></div>
        <div class="r gt g2">Action</div>
        <div class="r opt o1"><i class="radio ron"></i><span>Create new table</span></div>
        <div class="r opt o2"><i class="cb"></i><span>Drop existing one</span></div>
        <div class="r opt o3 dis"><i class="radio"></i><span>Append data to table</span></div>
        <div class="r gt g3">Options</div>
        <div class="r r25 pk opts"><i class="cb"></i><span class="ol">Primary key</span><span class="inp w316"></span></div>
        <div class="r r25 m8 opts"><i class="cb"></i><span class="ol"><em>Geometry column</em></span><span class="inp w316"><b>geom</b></span></div>
        <div class="r r25 m8 opts"><i class="cb"></i><span class="ol src">Source SRID</span><span class="inp w98"></span><i class="cb tgt"></i><span class="ol tl2">Target SRID</span><span class="inp w99"></span></div>
        <div class="r r25 m8 opts"><i class="cb"></i><span class="ol">Encoding</span><span class="inp w316 enc"><b>UTF-8</b><i class="dd"><svg viewBox="0 0 9 6"><path d="M0 0h9L4.500 6z" fill="#999" /></svg></i></span></div>
        <div class="r opts o4 dis"><i class="cb cbd"></i><span class="ol">Create single-part geometries instead of multi-part</span></div>
        <div class="r opts o5"><svg class="chk"><use href="#check" /></svg><span class="ol">Create spatial index</span></div>
        <div class="r r25 btns"><button class="btn b84"><u>C</u>ancel</button><button class="btn b84 ok"><u>O</u>K</button></div>
      </div>
    </section>
  </div>
</template>

<style>
body { margin: 0; background: #fff; overflow: hidden; }
</style>

<style scoped>
* { box-sizing: border-box; }
.defs { position: absolute; width: 0; height: 0; }
.desktop { position: relative; width: 1366px; height: 768px; overflow: hidden; display: flex; flex-direction: column; background: #cecece; color: #3c3c3c; font: 13px/18px "Noto Sans", "Open Sans", sans-serif; letter-spacing: -.14px; }
.desktop svg { display: block; flex: none; overflow: visible; }
.desktop span { white-space: nowrap; }
u { text-decoration: underline; text-underline-offset: 3px; text-decoration-thickness: 1px; }
b, em, i { font-weight: normal; font-style: normal; }
.i24 { width: 24px; height: 24px; }
.i16 { width: 16px; height: 16px; }
.chk { width: 16px; height: 16px; }
.titlebar { display: flex; align-items: center; background: linear-gradient(#e6e6e6, #cecece); height: 22px; position: relative; }
.wt { flex: 1; text-align: center; font: bold 12px/16px "Open Sans", sans-serif; letter-spacing: -.2px; color: #b4b4b4; text-shadow: 1px 1px 0 #eee; }
.wt-main { padding-right: 9px; letter-spacing: -.13px; }
.wt-db { padding-right: 23px; }
.tri { width: 10px; height: 6px; }
.main-title { height: 27px; border-top: 1px solid #8b8b8b; box-shadow: inset 0 1px #fff; padding: 0 5px 0 5px; }
.winctl { width: 54px; height: 12px; margin-left: -10px; }
.menubar { height: 22px; display: flex; align-items: center; padding-left: 13px; padding-bottom: 5px; flex: none; }
.toolbar { height: 41px; flex: none; display: flex; align-items: center; background: linear-gradient(#cecece, #b6b6b6); border-bottom: 2px solid #8b8b8b; }
.tool { display: flex; justify-content: center; align-items: center; flex: none; height: 34px; }
.tool.on { background: #b2b2b2; border: 1px solid #808080; border-radius: 3px; box-shadow: inset 0 1px 2px #979797; }
.body { flex: 1; display: flex; min-height: 0; }
.side { width: 46px; display: flex; flex-direction: column; align-items: center; }
.stool { display: flex; align-items: center; width: 46px; padding-left: 11px; flex: none; }
.mini { width: 7px; height: 5px; margin-left: -3px; }
.chev { width: 7px; height: 9px; margin: auto 5px 3px 0; }
.dock { width: 295px; display: flex; flex-direction: column; }
.dock-head { height: 24px; display: flex; align-items: center; padding: 0 4px 2px 2px; gap: 5px; }
.dock-head span { flex: 1; }
.dockbtn { width: 12px; height: 12px; }
.layers { flex: 1; background: #fcfcfc; border: 1px solid #8b8b8b; border-right: 0; border-bottom: 0; color: #000; }
.lrow { height: 21px; display: flex; align-items: center; padding-left: 7px; padding-bottom: 1px; }
.lrow span { padding-bottom: 1px; }
.lrow .dark { width: 11px; height: 9px; margin-right: 7px; }
.lrow .chk { margin-right: 7px; }
.lrow .i16 { margin-right: 6px; }
.lrow.sel { background: linear-gradient(#a3bad3, #8ba6c1); color: #fff; margin-right: 1px; }
.lrow.sel span { text-decoration: underline; text-underline-offset: 3px; letter-spacing: -.2px; }
.srow { height: 18px; display: flex; align-items: center; padding-left: 43px; width: 61px; }
.srow i { flex: none; }
.sdot { width: 9px; height: 9px; border-radius: 50%; background: #1550ab; border: 1px solid #0a1c3a; margin-left: 4px; }
.spurple, .sblue { width: 16px; height: 1px; background: #94588a; margin-top: 1px; }
.sblue { background: #2318a5; }
.sgreen { width: 16px; height: 16px; background: #7ba33a; border: 1px solid #334c16; }
.split, .dsplit { width: 5px; background: repeating-conic-gradient(#e2e2e2 0 25%, #bdbdbd 0 50%) 0 0/2px 2px; }
.canvas { flex: 1; background: #fff; border-left: 1px solid #8b8b8b; box-shadow: inset 3px 3px 6px #ddd; }
.status { height: 31px; border-top: 1px solid #aaa; flex: none; display: flex; align-items: center; padding-bottom: 2px; padding-left: 553px; }
.stbtn { width: 18px; height: 18px; }
.lab { flex: none; padding-bottom: 1px; }
.s-co { width: 81px; margin-left: 10px; }
.field { display: flex; align-items: center; height: 19px; background: #fff; border: 1px solid #999; border-radius: 4px; box-shadow: 0 1px #e4e4e4; color: #000; overflow: hidden; }
.s-cf { width: 298px; justify-content: center; letter-spacing: -.1px; }
.s-sc { width: 45px; margin-left: 10px; }
.s-sf { width: 98px; padding-left: 3px; justify-content: space-between; }
.dd { width: 23px; align-self: stretch; display: flex; align-items: center; justify-content: center; border-left: 1px solid #aaa; background: linear-gradient(#e4e4e4, #cacaca); }
.dd svg { width: 9px; height: 6px; margin: 3px 0 0 3px; }
.s-stop { margin-left: 8px; }
.s-ck { margin-left: 9px; }
.s-re { width: 61px; margin-left: 6px; }
.s-us { width: 89px; }
.s-wn { margin-left: 8px; }
.taskbar { height: 38px; flex: none; background: linear-gradient(#535353, #484848 3px); display: flex; align-items: center; color: #e2e2e2; }
.tt { padding-bottom: 2px; }
.start { width: 38px; height: 38px; background: #383838; }
.start svg { width: 38px; height: 38px; }
.tk { width: 36px; height: 34px; }
.k-fo { margin-left: 17px; }
.k-ff { margin-left: 3px; }
.k-ed { margin-left: 3px; }
.k-te { margin-left: 0; }
.k-q { width: 30px; height: 34px; margin-left: 14px; }
.pager-on { width: 49px; height: 36px; margin-left: 12px; background: #7894b3; border: 1px solid #e8e8e8; display: flex; justify-content: flex-end; align-items: flex-end; }
.pq { width: 24px; height: 28px; margin: 0 -14px 3px 0; }
.pwin { width: 26px; height: 30px; border: 1px solid #e8e8e8; background: #7894b3; display: flex; align-items: center; justify-content: center; margin-right: -1px; position: relative; }
.pwin svg { width: 18px; height: 20px; }
.pager-off { width: 48px; height: 36px; background: #353535; }
.tq { width: 13px; height: 16px; margin-left: 11px; }
.td { width: 16px; height: 18px; }
.t1 { margin-left: 8px; width: 177px; letter-spacing: -.09px; }
.t2 { margin-left: 7px; }
.us { margin-left: auto; width: 43px; font: bold 16px/18px "Open Sans", sans-serif; letter-spacing: .6px; padding-bottom: 2px; }
.bat { width: 11px; height: 19px; }
.mail { width: 18px; height: 14px; margin-left: 9px; }
.snd { width: 19px; height: 16px; margin-left: 6px; }
.date { width: 119px; margin-left: 12px; }
.win { position: absolute; border: 1px solid #858585; border-radius: 7px 7px 1px 1px; background: #cecece; display: flex; flex-direction: column; }
.win .titlebar { border-radius: 6px 6px 0 0; box-shadow: inset 0 1px #fff; flex: none; }
.db { left: 358px; top: 97px; width: 754px; height: 590px; box-shadow: 0 5px 14px rgba(0, 0, 0, .45); }
.db .titlebar, .dlg .titlebar { padding-left: 13px; }
.db-in { flex: 1; border: 3px solid #dedede; border-top: 0; display: flex; flex-direction: column; min-height: 0; }
.db .titlebar { padding-top: 2px; height: 24px; }
.dbmenu { height: 27px; display: flex; align-items: center; padding: 0 0 5px 13px; }
.m1 { width: 75px; }
.dbtools { height: 37px; display: flex; align-items: center; background: linear-gradient(#cecece, #b6b6b6); border-bottom: 1px solid #8b8b8b; gap: 16px; padding-bottom: 2px; }
.dbtools .g { margin: 0 -15px 0 -6px; }
.dbi { width: 20px; height: 20px; }
.dbbody { height: 475px; display: flex; }
.treecol { width: 256px; display: flex; flex-direction: column; }
.treehead { height: 25px; padding: 3px 0 0 2px; }
.treebox { flex: 1; min-height: 0; background: #fcfcfc; border: 1px solid #8b8b8b; border-right: 0; display: flex; color: #000; overflow: hidden; }
.rows { width: 239px; height: 448px; overflow: hidden; flex: none; }
.trow { height: 19px; display: flex; align-items: center; padding-left: 8px; }
.trow span { padding-bottom: 2px; }
.ta { width: 9px; height: 9px; }
.trow .tl { width: 16px; height: 16px; margin: 0 5px 0 7px; }
.trow .ta + .tl { margin: 0 5px 0 7px; }
.tsel { background: linear-gradient(#a3bad3, #8ba6c1); color: #fff; padding-left: 28px; }
.tsel span { margin-left: 6px; }
.leaf { padding-left: 56px; }
.leaf .tl { margin-right: 6px; }
.sbar { width: 15px; background: linear-gradient(90deg, #e4e4e4, #f8f8f8); border-radius: 8px; padding: 12px 3px; }
.sbar i { display: block; height: 40px; border: 1px solid #a0a0a0; border-radius: 5px; background: #d4d4d4; }
.dsplit { width: 6px; }
.infocol { flex: 1; display: flex; flex-direction: column; }
.tabs { height: 30px; display: flex; align-items: flex-end; border-bottom: 1px solid #8b8b8b; }
.tab { height: 27px; border: 1px solid #8b8b8b; border-bottom: 0; background: #b5b5b5; color: #868686; border-radius: 4px 4px 0 0; text-align: center; line-height: 24px; }
.act { height: 30px; width: 40px; background: linear-gradient(#e4e4e4, #d2d2d2); color: #3c3c3c; line-height: 27px; margin-bottom: -1px; }
.tb2 { width: 49px; margin-left: -1px; }
.tb3 { width: 65px; margin-left: -1px; }
.page { flex: 1; border: 1px solid #8b8b8b; margin: 1px 0 0 1px; background: #fcfcfc; color: #000; padding: 4px 4px 0 5px; overflow: hidden; }
h1 { margin: 0; background: #cfc; height: 32px; font: bold 26px/30px "Open Sans", sans-serif; letter-spacing: -.25px; padding-left: 7px; }
h2 { margin: 24px 0 0 8px; font: bold 19.500px/26px "Open Sans", sans-serif; letter-spacing: -.15px; }
.dlg { left: 821px; top: 94px; width: 517px; height: 598px; box-shadow: 0 6px 20px rgba(0, 0, 0, .6); }
.dlg .titlebar { height: 23px; padding-top: 2px; }
.x { width: 10px; height: 10px; margin-right: 12px; }
.wt-dlg { color: #666; padding-right: 2px; letter-spacing: -.25px; }
.dlg-in { flex: 1; border: 3px solid #dedede; border-top: 0; padding: 0 12px 0 11px; display: flex; flex-direction: column; }
.r { display: flex; align-items: center; height: 18px; flex: none; }
.r25 { height: 25px; }
.in-row { margin-top: 12px; }
.l-in { width: 41px; padding-bottom: 2px; }
.combo, .inp { display: flex; align-items: center; justify-content: space-between; height: 25px; border: 1px solid #929292; border-radius: 4px; box-shadow: 0 1px #e2e2e2; background: #fdfdfd; color: #000; padding-left: 3px; overflow: hidden; flex: none; }
.combo b { padding-bottom: 2px; letter-spacing: -.2px; }
.inp b { padding-bottom: 1px; }
.c-in { width: 416px; }
.long { width: 404px; }
.off { background: linear-gradient(#cacaca, #c0c0c0); border-color: #aaa; justify-content: flex-end; }
.spin { width: 8px; height: 12px; margin: 6px 4px 0 0; }
.btn { height: 25px; border: 1px solid #888; border-radius: 3px; background: linear-gradient(#e8e8e8, #cacaca); color: #3c3c3c; font: inherit; letter-spacing: inherit; padding: 0 0 2px; text-align: center; box-shadow: 0 1px 1px #aaa, inset 0 1px #f4f4f4; flex: none; }
.dots { width: 22px; height: 23px; margin-left: 7px; }
.up-row { margin-top: 8px; justify-content: flex-end; }
.upd { width: 108px; }
hr { width: 486px; height: 2px; border: 0; margin: 7px 0 0; border-top: 1px solid #a0a0a0; border-bottom: 1px solid #f8f8f8; flex: none; }
.gt { color: #000; padding-left: 6px; }
.g1 { margin-top: 10px; }
.sch { margin-top: 5px; }
.m8 { margin-top: 8px; }
.l-f { padding-left: 17px; width: 73px; padding-bottom: 2px; }
.g2 { margin-top: 21px; padding-left: 5px; }
.opt { padding-left: 20px; }
.opt span { margin-left: 8px; }
.o1 { margin-top: 5px; }
.o2 { margin-top: 10px; padding-left: 60px; }
.o3 { margin-top: 10px; }
.radio { width: 14px; height: 14px; border: 1px solid #b4b4b4; border-radius: 50%; background: #d6d6d6; margin-left: -1px; }
.opt .radio + span { margin-left: 9px; }
.ron { background: radial-gradient(circle, #111 0 2.500px, #b2c9e0 3.200px); border-color: #5b7690; }
.dis { color: #7b7b7b; }
.cb { width: 13px; height: 13px; border: 1px solid #929292; border-radius: 3px; background: #fcfcfc; box-shadow: 0 1px #e4e4e4; flex: none; }
.r25 .cb { margin-bottom: 2px; }
.cbd { background: #d4d4d4; border-color: #b4b4b4; }
.g3 { margin-top: 23px; padding-left: 5px; }
.pk { margin-top: 5px; }
.opts { padding-left: 20px; }
.ol { width: 120px; margin-left: 8px; padding-bottom: 4px; }
em { outline: 1px dotted #333; outline-offset: 1px; }
.inp { background: #dadada; border-color: #a0a0a0; color: #858585; }
.w316 { width: 316px; }
.w98 { width: 98px; }
.w99 { width: 99px; }
.src { width: 86px; }
.tgt { margin-left: 50px; }
.tl2 { width: 82px; }
.enc .dd { background: #c6c6c6; }
.o4 { margin-top: 8px; }
.o4 .ol { padding-bottom: 0; }
.o5 { margin-top: 11px; padding-left: 19px; }
.o5 .ol { margin-left: 6px; padding-bottom: 2px; }
.btns { margin-top: 20px; justify-content: flex-end; gap: 8px; }
.b84 { width: 83px; }
.ok { background: linear-gradient(#c2c8cc, #a7adb2); border-color: #7c8287; box-shadow: 0 1px 1px #aaa; }
</style>
